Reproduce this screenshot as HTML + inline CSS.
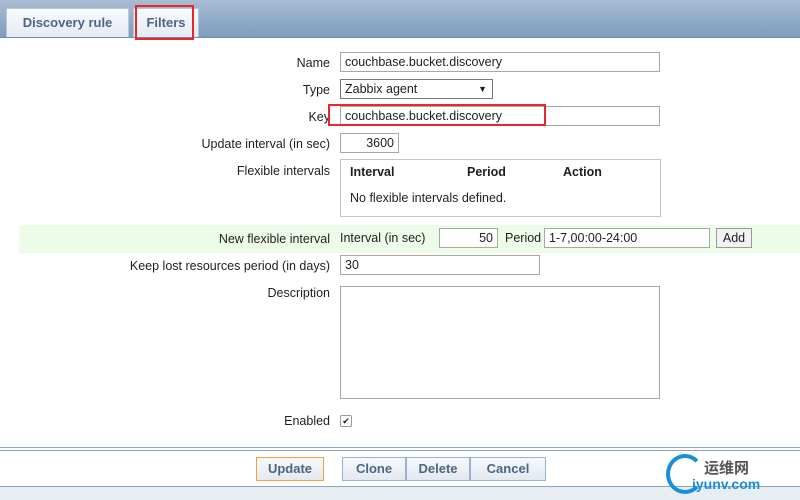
<!DOCTYPE html>
<html><head><style>
body{margin:0;width:800px;height:500px;background:#fff;font-family:"Liberation Sans","DejaVu Sans",sans-serif;font-size:12.5px;color:#1f1f1f;position:relative;overflow:hidden}
.a{position:absolute}
.top{left:0;top:0;width:800px;height:37px;background:linear-gradient(#a9bdd3,#7d9cbd)}
.tab{top:8px;height:28px;background:linear-gradient(#f8fafc,#e4ebf2);border:1px solid #b8c7d8;border-bottom:none;font-weight:bold;color:#4d6585;font-size:13px;line-height:28px;text-align:center}
.lbl{text-align:right;width:330px;left:0}
.inp{border:1px solid #a9a9a0;height:18px;background:#fff;line-height:18px;padding-left:4px;box-sizing:border-box}
.btn{border:1px solid #9bb2cc;background:linear-gradient(#f7f9fb,#e3e9f0);color:#4d6585;font-weight:bold;font-size:13px;text-align:center;line-height:22px;height:24px;top:457px;box-sizing:border-box}
.red{border:2px solid #e8262e}
</style></head><body>
<div class="a top"></div>
<div class="a" style="left:0;top:37px;width:800px;height:1px;background:#6e8db0"></div>
<div class="a tab" style="left:6px;width:121px">Discovery rule</div>
<div class="a tab" style="left:133px;width:64px">Filters</div>
<div class="a red" style="left:135px;top:5px;width:55px;height:31px"></div>

<div class="a lbl" style="top:56px">Name</div>
<div class="a inp" style="left:340px;top:52px;width:320px;height:20px">couchbase.bucket.discovery</div>
<div class="a lbl" style="top:83px">Type</div>
<div class="a inp" style="left:340px;top:79px;width:153px;height:20px;border-color:#777">Zabbix agent<span style="position:absolute;right:5px;font-size:9px">▼</span></div>
<div class="a lbl" style="top:110px">Key</div>
<div class="a inp" style="left:340px;top:106px;width:320px;height:20px">couchbase.bucket.discovery</div>
<div class="a red" style="left:328px;top:104px;width:214px;height:18px"></div>
<div class="a lbl" style="top:137px">Update interval (in sec)</div>
<div class="a inp" style="left:340px;top:133px;width:59px;height:20px;text-align:right;padding-right:4px">3600</div>
<div class="a lbl" style="top:164px">Flexible intervals</div>
<div class="a" style="left:340px;top:159px;width:319px;height:56px;border:1px solid #bcc7d2"></div>
<div class="a" style="left:350px;top:165px;font-weight:bold">Interval</div>
<div class="a" style="left:467px;top:165px;font-weight:bold">Period</div>
<div class="a" style="left:563px;top:165px;font-weight:bold">Action</div>
<div class="a" style="left:350px;top:191px">No flexible intervals defined.</div>
<div class="a" style="left:19px;top:225px;width:781px;height:28px;background:#edfbe9"></div>
<div class="a lbl" style="top:232px">New flexible interval</div>
<div class="a" style="left:340px;top:231px">Interval (in sec)</div>
<div class="a inp" style="left:439px;top:228px;width:59px;height:20px;text-align:right;padding-right:4px">50</div>
<div class="a" style="left:505px;top:231px">Period</div>
<div class="a inp" style="left:544px;top:228px;width:166px;height:20px">1-7,00:00-24:00</div>
<div class="a inp" style="left:716px;top:228px;width:36px;height:20px;padding:0;text-align:center;border-color:#999;background:#f2f2f2">Add</div>
<div class="a lbl" style="top:259px">Keep lost resources period (in days)</div>
<div class="a inp" style="left:340px;top:255px;width:200px;height:20px">30</div>
<div class="a lbl" style="top:286px">Description</div>
<div class="a inp" style="left:340px;top:286px;width:320px;height:113px"></div>
<div class="a lbl" style="top:414px">Enabled</div>
<div class="a" style="left:340px;top:415px;width:10px;height:10px;border:1px solid #999;border-radius:2px;font-size:9px;line-height:10px;text-align:center">✔</div>
<div class="a" style="left:0;top:447px;width:800px;height:1px;background:#8aa3c0"></div>
<div class="a" style="left:0;top:450px;width:800px;height:1px;background:#8aa3c0"></div>
<div class="a" style="left:0;top:486px;width:800px;height:1px;background:#8aa3c0"></div>
<div class="a" style="left:0;top:487px;width:800px;height:13px;background:#e8edf2"></div>
<div class="a btn" style="left:256px;width:68px;border-color:#f0a040">Update</div>
<div class="a btn" style="left:342px;width:64px">Clone</div>
<div class="a btn" style="left:406px;width:64px">Delete</div>
<div class="a btn" style="left:470px;width:76px">Cancel</div>
<div class="a" style="left:666px;top:454px;width:38px;height:40px;border-radius:50%;border:4px solid #1a8fd8;border-right-color:transparent;box-sizing:border-box"></div>
<div class="a" style="left:704px;top:457px;font-size:15px;font-weight:bold;color:#555;font-family:'Liberation Sans','Noto Sans CJK SC',sans-serif">运维网</div>
<div class="a" style="left:692px;top:476px;font-size:14px;font-weight:bold;color:#1a8fd8">iyunv.com</div>
</body></html>
